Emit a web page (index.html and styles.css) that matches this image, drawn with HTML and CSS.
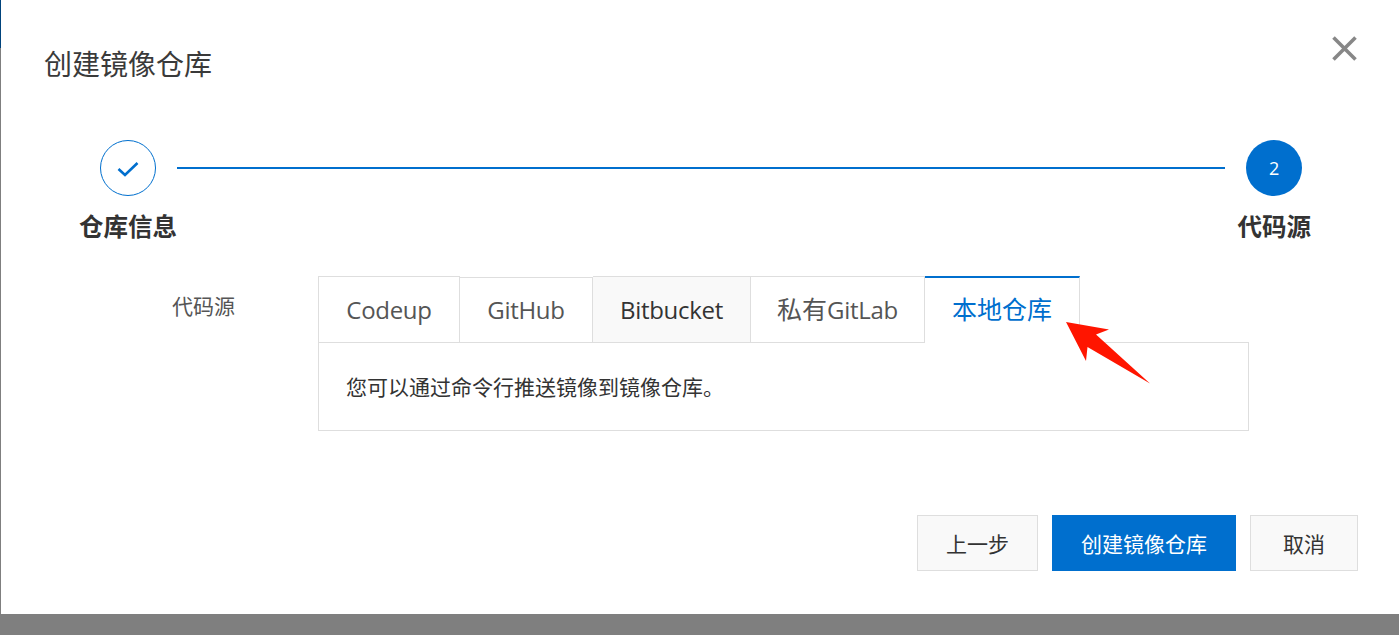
FILE: index.html
```html
<!DOCTYPE html>
<html lang="zh-CN">
<head>
<meta charset="utf-8">
<title>创建镜像仓库</title>
<link rel="stylesheet" href="styles.css">
</head>
<body>
<div class="page">
  <div class="rail"><div class="rail-top"></div></div>
  <div class="dialog">
    <header class="head">
      <h1 class="title">创建镜像仓库</h1>
      <button class="close" aria-label="关闭">
        <svg width="25" height="25" viewBox="0 0 25 25"><path d="M1.5 1.5 L23.5 23.5 M23.5 1.5 L1.5 23.5" stroke="#878787" stroke-width="3.6" fill="none"/></svg>
      </button>
    </header>
    <div class="steps">
      <div class="step">
        <div class="dot done">
          <svg width="22" height="18" viewBox="0 0 22 18"><path d="M1.5 9 L8 15 L20.5 3" stroke="#006fce" stroke-width="2.6" fill="none"/></svg>
        </div>
        <div class="step-label">仓库信息</div>
      </div>
      <div class="line"></div>
      <div class="step">
        <div class="dot now">2</div>
        <div class="step-label">代码源</div>
      </div>
    </div>
    <div class="form">
      <div class="form-label">代码源</div>
      <div class="form-body">
        <div class="tabs">
          <div class="tab t-codeup"><span class="latin">Codeup</span></div>
          <div class="tab t-github"><span class="latin">GitHub</span></div>
          <div class="tab t-bit"><span class="latin">Bitbucket</span></div>
          <div class="tab t-gitlab">私有<span class="latin">GitLab</span></div>
          <div class="tab t-local">本地仓库</div>
        </div>
        <div class="panel">您可以通过命令行推送镜像到镜像仓库。</div>
        <svg class="arrow" width="86" height="63" viewBox="0 0 86 63"><polygon points="0,0 43,7.5 30,12.5 84,61.5 21.5,25 20,39" fill="#ff1500"/></svg>
      </div>
    </div>
    <footer class="foot">
      <button class="btn b-prev">上一步</button>
      <button class="btn primary">创建镜像仓库</button>
      <button class="btn b-cancel">取消</button>
    </footer>
  </div>
</div>
</body>
</html>
```
FILE: styles.css
```css
* { box-sizing: border-box; }
html, body { margin: 0; padding: 0; height: 100%; overflow: hidden; }
body {
  background: #7f7f7f;
  font-family: "Open Sans", "Noto Sans CJK SC", sans-serif;
  color: #333;
}
.page { display: flex; height: 614px; }
.rail { width: 1px; flex: none; }
.rail-top { height: 48px; background: #00437c; }
.dialog {
  flex: 1;
  background: #fff;
  display: flex;
  flex-direction: column;
  padding: 0 41px 43px 0;
}
.head {
  display: flex;
  justify-content: space-between;
  align-items: flex-start;
  height: 140px;
  padding: 44px 0 0 43px;
}
.title { margin: 0; font-size: 28px; font-weight: 400; line-height: 40px; color: #3a3a3a; }
.close { margin: -8px 1px 0 0; padding: 0; border: 0; background: none; height: 25px; }
.steps { display: flex; align-items: flex-start; padding: 0 47px 0 78px; }
.step { display: flex; flex-direction: column; align-items: center; }
.dot {
  width: 56px; height: 56px; border-radius: 50%;
  display: flex; align-items: center; justify-content: center;
}
.done { border: 1px solid #006fce; }
.done svg { width: 22px; height: 18px; margin-top: 1px; }
.now { background: #006fce; color: #fff; font-size: 18px; }
.step-label { font-size: 24.5px; font-weight: 700; line-height: 36px; margin-top: 13px; color: #333; white-space: nowrap; }
.line { flex: 1; height: 2px; background: #006fce; margin: 27px 13px 0 0; }
.form { display: flex; margin-top: 31px; }
.form-label { width: 146px; margin-left: 171px; font-size: 21px; line-height: 28px; padding-top: 16px; color: #555; flex: none; }
.form-body { width: 931px; position: relative; }
.tabs { display: flex; height: 66px; position: relative; z-index: 1; }
.tab {
  height: 67px;
  border: 1px solid #dedede;
  border-left: 0;
  font-size: 25px;
  line-height: 64px;
  text-align: center;
  color: #555;
  background: #fff;
}
.latin { font-size: 24px; letter-spacing: -0.3px; }
.t-codeup { width: 142px; border-left: 1px solid #dedede; }
.t-github { width: 133px; margin-top: 1px; height: 66px; line-height: 62px; }
.t-bit { width: 158px; background: #f9f9f9; color: #333; }
.t-gitlab { width: 174px; }
.t-local { width: 155px; color: #006fce; border-top: 2px solid #006fce; border-bottom: 0; line-height: 63px; }
.panel {
  height: 89px;
  border: 1px solid #dedede;
  padding: 0 27px;
  font-size: 21px;
  line-height: 88px;
  color: #333;
}
.arrow { position: absolute; left: 748px; top: 46px; z-index: 2; }
.foot { margin-top: auto; display: flex; justify-content: flex-end; gap: 14px; }
.btn {
  height: 56px;
  border: 1px solid #dedede;
  background: #f9f9f9;
  font: inherit;
  font-size: 21px;
  color: #333;
  padding: 0;
}
.b-prev { width: 121px; }
.primary { width: 184px; background: #006fce; border-color: #006fce; color: #fff; }
.b-cancel { width: 108px; }
```
